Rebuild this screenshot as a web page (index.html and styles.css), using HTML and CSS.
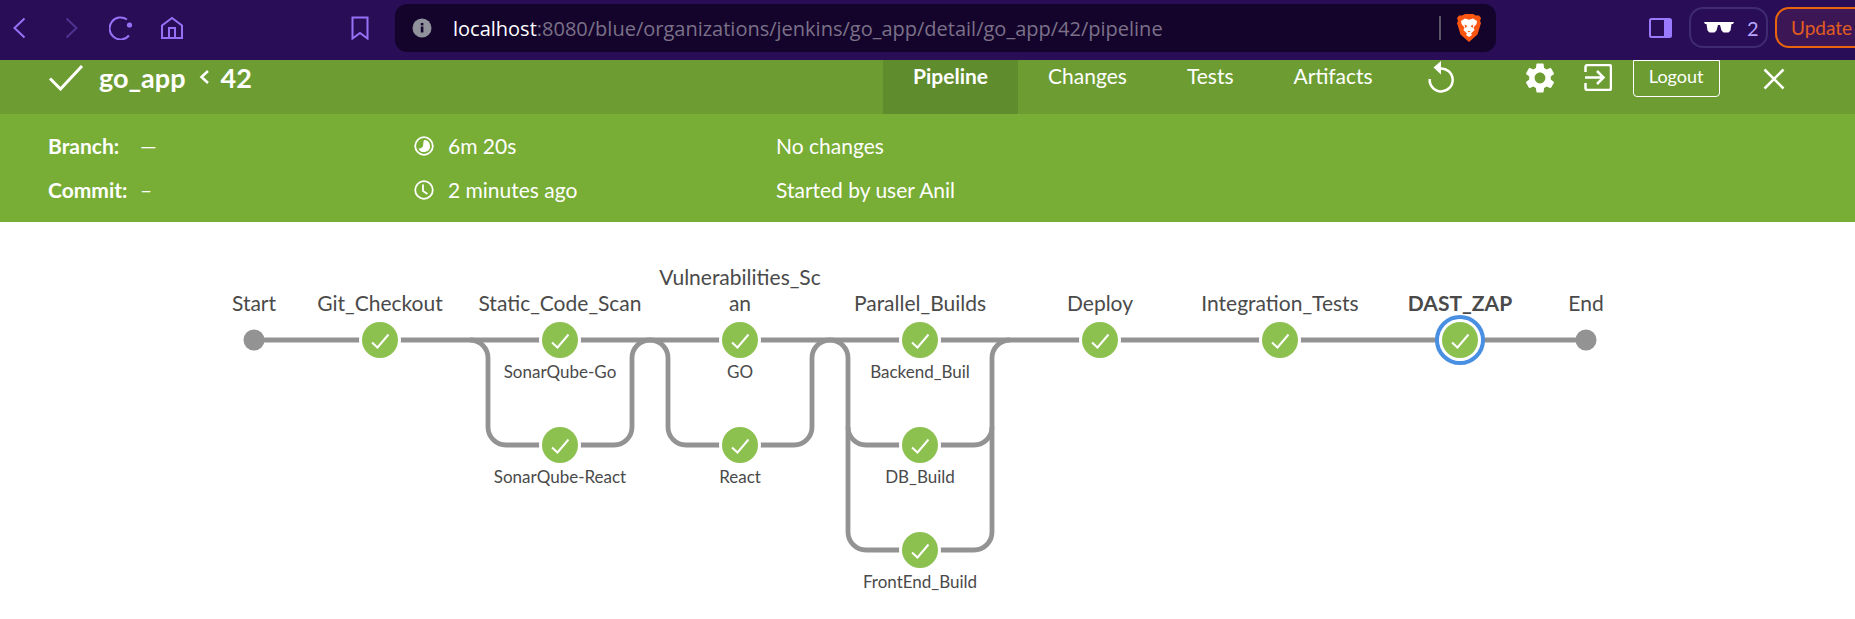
FILE: index.html
```html
<!DOCTYPE html>
<html lang="en">
<head>
    <meta charset="UTF-8">
    <title>go_app 42 - Pipeline</title>
    <link rel="stylesheet" href="styles.css">
</head>
<body>

<!-- browser toolbar -->
<div class="toolbar">
    <div class="nav-group">
        <svg class="tb-icon" viewBox="0 0 24 24"><path d="M16.5 2.5L6.5 12l10 9.5"/></svg>
        <svg class="tb-icon dim" viewBox="0 0 24 24"><path d="M7.5 2.5L17.5 12l-10 9.5"/></svg>
        <svg class="tb-icon" viewBox="0 0 24 24"><path d="M20 19.5A11 11 0 1 1 18 3.5"/><circle class="dot" cx="20.5" cy="9" r="2.6"/></svg>
        <svg class="tb-icon" viewBox="0 0 24 24"><path d="M2 22V9.5L12 2l10 7.500V22zM9 22V12h6v10"/></svg>
    </div>
    <svg class="tb-icon bookmark" viewBox="0 0 24 24"><path d="M4.500 1.500h15v21L12 17l-7.500 5.500z"/></svg>

    <div class="url-bar">
        <svg class="info-icon" viewBox="0 0 20 20">
            <circle cx="10" cy="10" r="9.500" fill="#90939b"/>
            <rect x="8.800" y="8.500" width="2.600" height="6" fill="#14042c"/>
            <rect x="8.800" y="5" width="2.600" height="2.400" fill="#14042c"/>
        </svg>
        <span class="url-text"><span class="url-host">localhost</span>:8080/blue/organizations/jenkins/go_app/detail/go_app/42/pipeline</span>
        <span class="url-sep"></span>
        <svg class="lion" viewBox="0 0 24 28">
            <path fill="#fb5512" d="M5 1.500L8 0h8l3 1.500h3L24 4l-1 3 1 2-3.500 11.500L12 28l-8.500-7.500L0 9l1-2-1-3 2-2.500z"/>
            <path fill="#fff" d="M4 7l4-2.500 4 1.300 4-1.300L20 7l-.5 3-3 3.500 1 2.500L14 19.500l1 1.500-3 2-3-2 1-1.500L6.500 16l1-2.500-3-3.500z"/>
            <path fill="#fb5512" d="M7.500 10.500l3 1.500-2 2zM16.500 10.500l-3 1.500 2 2zM10.500 17h3L12 18.500z"/>
        </svg>
    </div>

    <svg class="side-icon" viewBox="0 0 23 20">
        <rect x="1" y="1" width="21" height="18" rx="1.500" fill="none" stroke="#9a7bff" stroke-width="2"/>
        <rect x="15" y="1" width="7" height="18" fill="#9a7bff"/>
    </svg>
    <div class="private-pill">
        <svg class="glasses" viewBox="0 0 30 11">
            <path fill="#fff" d="M0 0h30l-1 2h-1.500l-1 6.500-2 2h-5l-2-2L16 3h-2l-1.500 5.500-2 2h-5l-2-2L2.500 2H1z"/>
        </svg>
        <span class="private-count">2</span>
    </div>
    <div class="update-btn">Update</div>
</div>

<!-- run header -->
<div class="run-header">
    <div class="run-title">
        <svg class="run-check" viewBox="0 0 36 27"><path d="M2 14.500L12.500 25 34 2"/></svg>
        <span class="run-name">go_app</span>
        <svg class="run-chevron" viewBox="0 0 11 16"><path d="M9 2L2.500 8 9 14"/></svg>
        <span class="run-name">42</span>
    </div>
    <div class="tabs">
        <a class="tab active">Pipeline</a>
        <a class="tab">Changes</a>
        <a class="tab">Tests</a>
        <a class="tab">Artifacts</a>
    </div>
    <svg class="act-icon replay" viewBox="0 0 30 32">
        <path class="line" d="M14 7.500A11.500 11.500 0 1 1 3.700 18"/>
        <path class="fill" d="M15 0v13.500L7.500 6.500z"/>
    </svg>
    <svg class="act-icon gear" viewBox="0 0 24 24">
        <path class="fill" d="M19.140 12.940c.04-.3.06-.61.06-.94 0-.32-.02-.64-.07-.94l2.030-1.580a.49.49 0 0 0 .12-.61l-1.920-3.320a.488.488 0 0 0-.59-.22l-2.390.96c-.5-.38-1.030-.7-1.620-.94l-.36-2.540a.484.484 0 0 0-.48-.41h-3.840c-.24 0-.43.17-.47.41l-.36 2.540c-.59.24-1.130.57-1.620.94l-2.390-.96c-.22-.08-.47 0-.59.22L2.740 8.870c-.12.21-.08.47.12.61l2.030 1.580c-.05.3-.09.63-.09.94s.02.64.07.94l-2.030 1.580a.49.49 0 0 0-.12.61l1.920 3.320c.12.22.37.29.59.22l2.390-.96c.5.38 1.030.7 1.620.94l.36 2.540c.05.24.24.41.48.41h3.840c.24 0 .44-.17.47-.41l.36-2.540c.59-.24 1.130-.56 1.620-.94l2.390.96c.22.08.47 0 .59-.22l1.920-3.320c.12-.22.07-.47-.12-.61l-2.010-1.580zM12 15.600c-1.980 0-3.600-1.620-3.600-3.600s1.620-3.600 3.600-3.600 3.600 1.620 3.600 3.600-1.620 3.600-3.600 3.600z"/>
    </svg>
    <svg class="act-icon exit" viewBox="0 0 28 27">
        <path class="line" d="M1.500 8V3a2 2 0 0 1 2-2h21.500a2 2 0 0 1 2 2v21a2 2 0 0 1-2 2H3.500a2 2 0 0 1-2-2v-5"/>
        <path class="line" d="M1 13.500h18M13 7l6.500 6.500L13 20"/>
    </svg>
    <a class="logout">Logout</a>
    <svg class="act-icon close" viewBox="0 0 22 22"><path class="line" d="M1.500 1.500l19 19M20.500 1.500l-19 19"/></svg>
</div>

<!-- run details -->
<div class="run-details">
    <div class="detail-col col-labels">
        <div class="detail-row"><span class="detail-label">Branch:</span><span>—</span></div>
        <div class="detail-row"><span class="detail-label">Commit:</span><span>–</span></div>
    </div>
    <div class="detail-col col-times">
        <div class="detail-row">
            <svg class="time-icon" viewBox="0 0 20 20">
                <circle class="line" cx="10" cy="10" r="8.800"/>
                <path class="fill" d="M10 4a6 6 0 1 1-5.500 8.400c2 .4 4-.5 4.500-2.400.4-1.800.2-4.200 1-6z"/>
            </svg>
            <span>6m 20s</span>
        </div>
        <div class="detail-row">
            <svg class="time-icon" viewBox="0 0 20 20">
                <circle class="line" cx="10" cy="10" r="8.800"/>
                <path class="line" d="M9 4.500V11l4.500 3"/>
            </svg>
            <span>2 minutes ago</span>
        </div>
    </div>
    <div class="detail-col">
        <div class="detail-row">No changes</div>
        <div class="detail-row">Started by user Anil</div>
    </div>
</div>

<!-- pipeline graph, the viewBox uses page coordinates -->
<svg class="pipeline" viewBox="0 222 1855 397">
    <defs>
        <g id="ok">
            <circle r="21" fill="#fff"/>
            <circle r="18" fill="#8cc04f"/>
            <path class="tick" d="M-8 2.500L-2.500 7.500 8.500-5.500"/>
        </g>
    </defs>

    <path class="conn" d="M254 340H1586"/>
    <path class="conn" d="M470 340a18 18 0 0 1 18 18v69a18 18 0 0 0 18 18h108a18 18 0 0 0 18-18v-69a18 18 0 0 1 18-18"/>
    <path class="conn" d="M650 340a18 18 0 0 1 18 18v69a18 18 0 0 0 18 18h108a18 18 0 0 0 18-18v-69a18 18 0 0 1 18-18"/>
    <path class="conn" d="M830 340a18 18 0 0 1 18 18v174a18 18 0 0 0 18 18h108a18 18 0 0 0 18-18v-174a18 18 0 0 1 18-18"/>
    <path class="conn" d="M848 427a18 18 0 0 0 18 18h108a18 18 0 0 0 18-18"/>

    <circle class="term" cx="254" cy="340" r="10.500"/>
    <circle class="term" cx="1586" cy="340" r="10.500"/>

    <use href="#ok" x="380" y="340"/>
    <use href="#ok" x="560" y="340"/>
    <use href="#ok" x="560" y="445"/>
    <use href="#ok" x="740" y="340"/>
    <use href="#ok" x="740" y="445"/>
    <use href="#ok" x="920" y="340"/>
    <use href="#ok" x="920" y="445"/>
    <use href="#ok" x="920" y="550"/>
    <use href="#ok" x="1100" y="340"/>
    <use href="#ok" x="1280" y="340"/>
    <circle class="selected" cx="1460" cy="340" r="22.800"/>
    <use href="#ok" x="1460" y="340"/>

    <text class="stage" x="254" y="311">Start</text>
    <text class="stage" x="380" y="311">Git_Checkout</text>
    <text class="stage" x="560" y="311">Static_Code_Scan</text>
    <text class="stage" x="740" y="285">Vulnerabilities_Sc</text>
    <text class="stage" x="740" y="311">an</text>
    <text class="stage" x="920" y="311">Parallel_Builds</text>
    <text class="stage" x="1100" y="311">Deploy</text>
    <text class="stage" x="1280" y="311">Integration_Tests</text>
    <text class="stage current" x="1460" y="311">DAST_ZAP</text>
    <text class="stage" x="1586" y="311">End</text>

    <text class="branch" x="560" y="378">SonarQube-Go</text>
    <text class="branch" x="560" y="483">SonarQube-React</text>
    <text class="branch" x="740" y="378">GO</text>
    <text class="branch" x="740" y="483">React</text>
    <text class="branch" x="920" y="378">Backend_Buil</text>
    <text class="branch" x="920" y="483">DB_Build</text>
    <text class="branch" x="920" y="588">FrontEnd_Build</text>
</svg>

</body>
</html>
```

FILE: styles.css
```css
body {
    margin: 0;
    height: 619px;
    overflow: hidden;
    background: #fff;
    font-family: Lato, sans-serif;
    font-size: 21px;
    color: #fff;
}

/* Browser toolbar */
.toolbar {
    display: flex;
    align-items: flex-start;
    height: 60px;
    background: #290e57;
    overflow: hidden;
}

.nav-group {
    display: flex;
    flex: none;
    gap: 26.5px;
    width: 348px;
    box-sizing: border-box;
    padding: 16px 0 0 8px;
}

.tb-icon {
    width: 24px;
    height: 24px;
    flex: none;
    fill: none;
    stroke: #9572f5;
    stroke-width: 2;
}

.tb-icon.dim {
    stroke: #4f3391;
}

.tb-icon .dot {
    fill: #9572f5;
    stroke: none;
}

.bookmark {
    margin-top: 16px;
}

.url-bar {
    display: flex;
    flex: none;
    align-items: center;
    width: 1101px;
    height: 48px;
    box-sizing: border-box;
    margin: 4px 0 0 23px;
    padding: 0 15px 0 17px;
    background: #14042c;
    border-radius: 12px;
}

.info-icon {
    width: 20px;
    height: 20px;
    flex: none;
}

.url-text {
    margin-left: 21px;
    font-family: "Open Sans", sans-serif;
    font-size: 20px;
    color: #7b7188;
    white-space: nowrap;
}

.url-host {
    color: #fff;
}

.url-sep {
    width: 2px;
    height: 24px;
    margin-left: auto;
    background: #5b5366;
}

.lion {
    width: 24px;
    height: 28px;
    margin-left: 16px;
    flex: none;
}

.side-icon {
    width: 23px;
    height: 20px;
    flex: none;
    margin: 18px 0 0 153px;
}

.private-pill {
    display: flex;
    flex: none;
    align-items: center;
    width: 79px;
    height: 41px;
    box-sizing: border-box;
    margin: 7px 0 0 17px;
    padding-left: 13px;
    border: 2px solid #3f2a73;
    border-radius: 14px;
}

.glasses {
    width: 30px;
    height: 11px;
    flex: none;
}

.private-count {
    margin-left: 13px;
    font-size: 20px;
    color: #b9a5ff;
}

.update-btn {
    flex: none;
    width: 110px;
    height: 41px;
    box-sizing: border-box;
    margin: 7px 0 0 7px;
    padding-left: 14px;
    border: 2px solid #e8650d;
    border-radius: 14px;
    background: #3d1755;
    color: #e25c20;
    font-size: 19px;
    line-height: 37px;
}

/* Run header */
.run-header {
    display: flex;
    align-items: flex-start;
    height: 54px;
    background: #6d9d32;
}

.run-title {
    display: flex;
    align-items: center;
    width: 835px;
    margin-left: 48px;
    height: 34px;
    flex: none;
}

.run-check {
    width: 36px;
    height: 27px;
    margin-top: 0;
    fill: none;
    stroke: #fff;
    stroke-width: 3;
}

.run-name {
    font-size: 27px;
    font-weight: 700;
    margin-left: 15px;
}

.run-chevron {
    width: 11px;
    height: 16px;
    margin-left: 13px;
    margin-right: -4px;
    fill: none;
    stroke: #fff;
    stroke-width: 2.500;
}

.tabs {
    display: flex;
    flex: none;
}

.tab {
    height: 54px;
    box-sizing: border-box;
    padding: 0 30px;
    line-height: 32px;
}

.tab.active {
    background: #5f8c2d;
    font-weight: 700;
}

.act-icon {
    flex: none;
}

.act-icon .line {
    fill: none;
    stroke: #fff;
    stroke-width: 2.500;
}

.act-icon .fill {
    fill: #fff;
}

.replay {
    width: 30px;
    height: 32px;
    margin: 1px 0 0 23px;
}

.gear {
    width: 36px;
    height: 36px;
    margin: 0 0 0 66px;
}

.exit {
    width: 28px;
    height: 27px;
    margin: 4px 0 0 26px;
}

.logout {
    width: 87px;
    height: 37px;
    box-sizing: border-box;
    margin-left: 21px;
    border: 1px solid #fff;
    border-radius: 0 0 4px 4px;
    text-align: center;
    font-size: 18px;
    line-height: 30px;
}

.close {
    width: 22px;
    height: 22px;
    margin: 8px 0 0 43px;
}

/* Run details */
.run-details {
    display: flex;
    height: 108px;
    background: #78ad36;
}

.detail-col {
    padding-top: 17px;
}

.col-labels {
    width: 366px;
    margin-left: 48px;
}

.col-times {
    width: 362px;
}

.detail-row {
    display: flex;
    align-items: center;
    height: 28px;
    margin-bottom: 16px;
    white-space: nowrap;
}

.detail-label {
    width: 92px;
    font-weight: 700;
}

.time-icon {
    width: 20px;
    height: 20px;
    margin: 2px 14px 0 0;
}

.time-icon .line {
    fill: none;
    stroke: #fff;
    stroke-width: 1.800;
}

.time-icon .fill {
    fill: #fff;
}

/* Pipeline graph */
.pipeline {
    display: block;
    width: 1855px;
    height: 397px;
}

.conn {
    fill: none;
    stroke: #949393;
    stroke-width: 4.800;
}

.term {
    fill: #949393;
}

.tick {
    fill: none;
    stroke: #fff;
    stroke-width: 2;
}

.selected {
    fill: #fff;
    stroke: #4a90e2;
    stroke-width: 4.500;
}

.stage, .branch {
    font-family: Lato, sans-serif;
    fill: #4a4a4a;
    text-anchor: middle;
}

.stage {
    font-size: 21px;
}

.stage.current {
    font-weight: 700;
}

.branch {
    font-size: 17px;
}
```
